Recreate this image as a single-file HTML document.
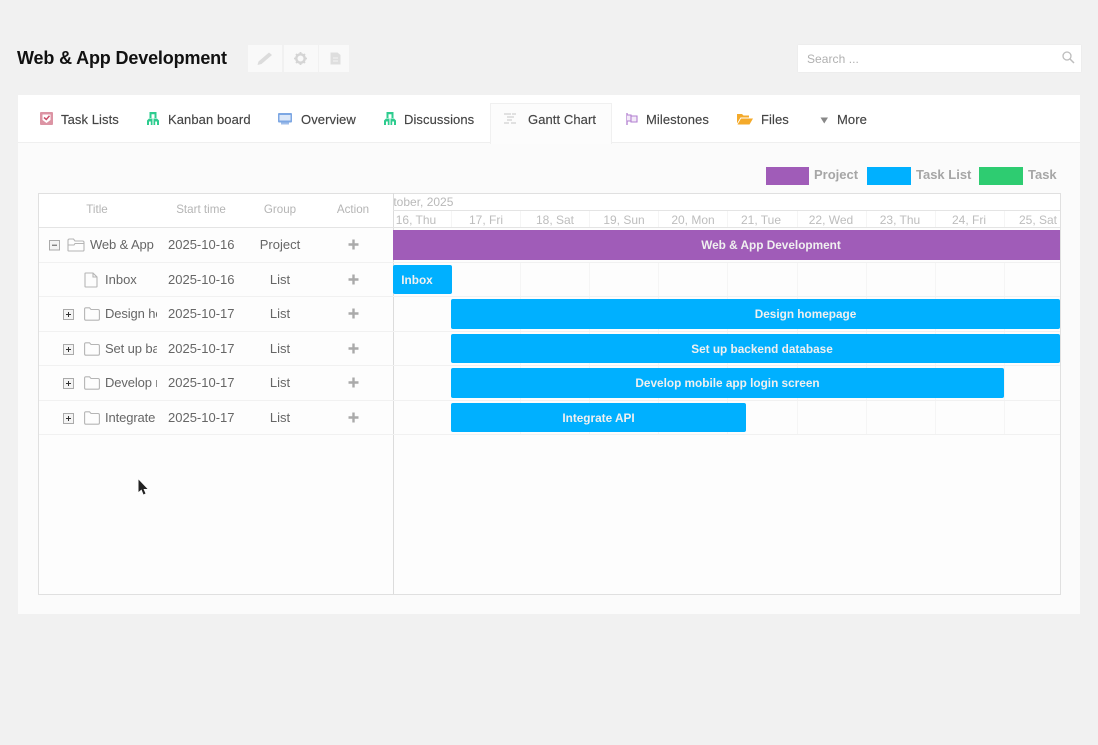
<!DOCTYPE html>
<html><head><meta charset="utf-8">
<style>
html,body{margin:0;padding:0;width:1098px;height:745px;overflow:hidden;background:#f1f1f1;font-family:"Liberation Sans",sans-serif}
#w{position:absolute;left:0;top:0;width:1098px;height:745px;overflow:hidden;background:#f1f1f1;filter:blur(.35px)}
.a{position:absolute}
.t{position:absolute;white-space:nowrap;line-height:16px}
.tab{position:absolute;top:112px;font-size:13px;letter-spacing:.08px;color:#444;white-space:nowrap;line-height:16px;-webkit-text-stroke:.15px #444}
.h{position:absolute;top:202px;font-size:11.6px;color:#b5b5b5;line-height:16px;transform:translateX(-50%);white-space:nowrap}
.c{position:absolute;font-size:13px;color:#666;line-height:16px;white-space:nowrap}
.k{letter-spacing:-.12px}
.m{transform:translateX(-50%)}
.d{position:absolute;top:212px;font-size:12px;color:#bdbdbd;line-height:16px;transform:translateX(-50%);white-space:nowrap}
.bar{position:absolute;color:#f0f0f0;font-weight:bold;font-size:11.8px;line-height:30px;border-radius:2px;background:#00b0ff;height:29.5px}
.bar span{position:absolute;top:0;transform:translateX(-50%);white-space:nowrap}
.hl{position:absolute;left:39px;width:1021px;height:1px;background:#f1f1f1}
.vl{position:absolute;width:1px;background:#f5f5f5}
.plus{position:absolute;left:348px;width:11px;height:11px}
.btn{position:absolute;top:45px;height:27px;background:#f9f9f9}
svg{position:absolute;overflow:visible}
</style></head><body><div id="w">

<div class="t" style="left:17px;top:48px;font-size:18px;line-height:21px;font-weight:bold;color:#111;letter-spacing:-.15px">Web &amp; App Development</div>

<div class="btn" style="left:248px;width:34px"></div>
<div class="btn" style="left:284px;width:34px"></div>
<div class="btn" style="left:319px;width:30px"></div>
<svg style="left:257px;top:51px" width="16" height="15" viewBox="0 0 16 15"><path d="M.5 14 L1.500 10.500 L12 1.500 L15 4 L4.500 13 Z" fill="#dcdcdc"/></svg>
<svg style="left:293px;top:51px" width="15" height="15" viewBox="0 0 15 15"><circle cx="7.500" cy="7.500" r="4.200" fill="none" stroke="#d5d5d5" stroke-width="2.400"/><path d="M7.500 1V3M7.500 12V14M1 7.500H3M12 7.500H14M3 3L4.500 4.500M10.500 10.500L12 12M12 3L10.500 4.500M4.500 10.500L3 12" stroke="#d5d5d5" stroke-width="1.800"/></svg>
<svg style="left:329.500px;top:52px" width="11" height="13" viewBox="0 0 11 13"><path d="M.5 .5H7.500L10.500 3V12.500H.5Z" fill="#dedede"/><path d="M3 6H8M3 9H8" stroke="#f4f4f4"/></svg>

<div class="a" style="left:798px;top:45px;width:283px;height:27px;background:#fff;box-shadow:0 0 1px #ddd"></div>
<div class="t" style="left:807px;top:51px;font-size:12px;letter-spacing:.05px;color:#b0b0b0">Search ...</div>
<svg style="left:1061px;top:50px" width="14" height="14" viewBox="0 0 14 14"><circle cx="6" cy="6" r="4" fill="none" stroke="#bdbdbd" stroke-width="1.300"/><path d="M9 9L13 13" stroke="#bdbdbd" stroke-width="1.500"/></svg>

<div class="a" style="left:18px;top:95px;width:1062px;height:519px;background:#fbfbfb"></div>
<div class="a" style="left:18px;top:95px;width:1062px;height:48px;background:#fff;border-bottom:1px solid #efefef;box-sizing:border-box"></div>
<div class="a" style="left:490px;top:103px;width:122px;height:41px;background:#fcfcfc;border:1px solid #f0f0f0;border-bottom:none;box-sizing:border-box"></div>

<svg style="left:40px;top:112px" width="13" height="13" viewBox="0 0 13 13"><rect x="0" y="0" width="13" height="13" rx="1" fill="#dc94a4"/><path d="M2.500 2.500H10.500V8L6.500 11L2.500 8Z" fill="#fff"/><path d="M4 5.500L6.300 7.500L9.500 3.800" stroke="#c9506b" stroke-width="1.500" fill="none"/></svg>
<div class="tab" style="left:61px">Task Lists</div>
<svg style="left:147px;top:112px" width="12" height="13" viewBox="0 0 12 13"><path d="M2.500 0H9.500V6H7.500V2.200H4.500V6H2.500Z M0 13V8.500L2 6.500H5.500V13H3.800V9.500H2V13Z M12 13V8.500L10 6.500H6.500V13H8.200V9.500H10V13Z" fill="#2ecc8f"/></svg>
<div class="tab" style="left:168px">Kanban board</div>
<svg style="left:278px;top:113px" width="14" height="12" viewBox="0 0 14 12"><rect x="0" y="0" width="14" height="9.500" rx="1" fill="#7da7e3"/><rect x="1.500" y="2" width="11" height="5.500" fill="#dbe7f8"/><rect x="3" y="9.500" width="8" height="2" fill="#9fbdea"/></svg>
<div class="tab" style="left:301px">Overview</div>
<svg style="left:384px;top:112px" width="12" height="13" viewBox="0 0 12 13"><path d="M2.500 0H9.500V6H7.500V2.200H4.500V6H2.500Z M0 13V8.500L2 6.500H5.500V13H3.800V9.500H2V13Z M12 13V8.500L10 6.500H6.500V13H8.200V9.500H10V13Z" fill="#2ecc8f"/></svg>
<div class="tab" style="left:404px">Discussions</div>
<svg style="left:504px;top:113px" width="13" height="12" viewBox="0 0 13 12"><path d="M0 1H7M8 1H12M3 4H10M3 7H8M0 10H5M7 10H12" stroke="#d8d8d8" stroke-width="1.500"/></svg>
<div class="tab" style="left:528px">Gantt Chart</div>
<svg style="left:626px;top:113px" width="12" height="12" viewBox="0 0 12 12"><path d="M1 0V12" stroke="#b27fd0" stroke-width="1.300"/><path d="M1 2H5V3H11V9H5V8H1M5 3V8" stroke="#b27fd0" stroke-width="1.100" fill="#f3eaf8"/></svg>
<div class="tab" style="left:646px">Milestones</div>
<svg style="left:737px;top:113px" width="16" height="12" viewBox="0 0 16 12"><path d="M0 1H5L6.500 2.500H12V4.500H3.500L0 10.500Z M4 5.500H16L12.500 11.500H.500Z" fill="#f4aa2a"/></svg>
<div class="tab" style="left:761px">Files</div>
<svg style="left:820px;top:116.500px" width="9" height="7" viewBox="0 0 9 7"><path d="M.5 .5H8L4.250 6.500Z" fill="#888"/></svg>
<div class="tab" style="left:837px">More</div>

<div class="a" style="left:766px;top:167px;width:43px;height:18px;background:#a05cb8"></div>
<div class="t" style="left:814px;top:167px;font-size:13px;font-weight:bold;color:#a6a6a6">Project</div>
<div class="a" style="left:867px;top:167px;width:44px;height:18px;background:#00b0ff"></div>
<div class="t" style="left:916px;top:167px;font-size:13px;font-weight:bold;color:#a6a6a6">Task List</div>
<div class="a" style="left:979px;top:167px;width:44px;height:18px;background:#2ecc71"></div>
<div class="t" style="left:1028px;top:167px;font-size:13px;font-weight:bold;color:#a6a6a6">Task</div>

<div class="a" style="left:38px;top:193px;width:1023px;height:402px;border:1px solid #e0e0e0;box-sizing:border-box;background:#fdfdfd"></div>
<div class="a" style="left:39px;top:194px;width:1021px;height:34px;background:#fff"></div>
<div class="a" style="left:393px;top:193px;width:1px;height:401px;background:#dcdcdc"></div>
<div class="a" style="left:39px;top:227px;width:1021px;height:1px;background:#e4e4e4"></div>
<div class="a" style="left:393px;top:210px;width:667px;height:1px;background:#e4e4e4"></div>

<div class="h" style="left:97px">Title</div>
<div class="h" style="left:201px">Start time</div>
<div class="h" style="left:280px">Group</div>
<div class="h" style="left:353px">Action</div>

<div class="a" style="left:394px;top:194px;width:200px;height:16px;overflow:hidden"><div class="t" style="left:-16px;top:0;font-size:12px;color:#b9b9b9">October, 2025</div></div>
<div class="d" style="left:416px">16, Thu</div>
<div class="d" style="left:486px">17, Fri</div>
<div class="d" style="left:555px">18, Sat</div>
<div class="d" style="left:624px">19, Sun</div>
<div class="d" style="left:693px">20, Mon</div>
<div class="d" style="left:761px">21, Tue</div>
<div class="d" style="left:831px">22, Wed</div>
<div class="d" style="left:900px">23, Thu</div>
<div class="d" style="left:969px">24, Fri</div>
<div class="d" style="left:1038px">25, Sat</div>

<div class="vl" style="left:451px;top:211px;height:16px"></div>
<div class="vl" style="left:520px;top:211px;height:16px"></div>
<div class="vl" style="left:589px;top:211px;height:16px"></div>
<div class="vl" style="left:658px;top:211px;height:16px"></div>
<div class="vl" style="left:727px;top:211px;height:16px"></div>
<div class="vl" style="left:797px;top:211px;height:16px"></div>
<div class="vl" style="left:866px;top:211px;height:16px"></div>
<div class="vl" style="left:935px;top:211px;height:16px"></div>
<div class="vl" style="left:1004px;top:211px;height:16px"></div>

<div class="vl" style="left:520px;top:262px;height:173px"></div>
<div class="vl" style="left:589px;top:262px;height:173px"></div>
<div class="vl" style="left:658px;top:262px;height:173px"></div>
<div class="vl" style="left:727px;top:262px;height:173px"></div>
<div class="vl" style="left:797px;top:262px;height:173px"></div>
<div class="vl" style="left:866px;top:262px;height:173px"></div>
<div class="vl" style="left:935px;top:262px;height:173px"></div>
<div class="vl" style="left:1004px;top:262px;height:173px"></div>

<div class="hl" style="top:262px"></div>
<div class="hl" style="top:296px"></div>
<div class="hl" style="top:331px"></div>
<div class="hl" style="top:365px"></div>
<div class="hl" style="top:400px"></div>
<div class="hl" style="top:434px"></div>

<div class="bar" style="left:393px;top:230px;width:667px;background:#a05cb8;border-radius:0"><span style="left:378px">Web &amp; App Development</span></div>
<div class="bar" style="left:393px;top:264.500px;width:58.500px"><span style="left:24px">Inbox</span></div>
<div class="bar" style="left:451px;top:299px;width:609px"><span style="left:354.500px">Design homepage</span></div>
<div class="bar" style="left:451px;top:333.500px;width:609px"><span style="left:311px">Set up backend database</span></div>
<div class="bar" style="left:451px;top:368px;width:552.500px"><span style="left:276.500px">Develop mobile app login screen</span></div>
<div class="bar" style="left:451px;top:402.500px;width:294.500px"><span style="left:147.500px">Integrate API</span></div>

<svg style="left:49px;top:240px" width="10" height="10" viewBox="0 0 10 10"><rect x=".5" y=".5" width="10" height="9.500" fill="#f4f4f4" stroke="#aaa"/><path d="M3 5.200H8" stroke="#555"/></svg>
<svg style="left:67px;top:238px" width="18" height="14" viewBox="0 0 18 14"><path d="M1 12.500V2.500Q1 1 2.500 1H6.500L8 3H15.500Q17 3 17 4.500V12Q17 13 16 13H2Q1 13 1 12.500ZM1 7H7L8 5.500H17" fill="none" stroke="#b5b5b5" stroke-width="1.100"/></svg>
<div class="c k" style="left:90px;top:237px">Web &amp; App</div>
<div class="c" style="left:168px;top:237px">2025-10-16</div>
<div class="c m" style="left:280px;top:237px">Project</div>
<svg class="plus" style="top:239px" viewBox="0 0 11 11"><path d="M5.500 .5V10.500M.5 5.500H10.500" stroke="#aaa" stroke-width="2.400"/></svg>

<svg style="left:84px;top:272px" width="14" height="16" viewBox="0 0 14 16"><path d="M1.500 1H9L13 5V14.500Q13 15 12.500 15H1.500Q1 15 1 14.500V1.500Q1 1 1.500 1ZM9 1V5H13" fill="none" stroke="#b5b5b5" stroke-width="1.100"/></svg>
<div class="c" style="left:105px;top:272px">Inbox</div>
<div class="c" style="left:168px;top:272px">2025-10-16</div>
<div class="c m" style="left:280px;top:272px">List</div>
<svg class="plus" style="top:274px" viewBox="0 0 11 11"><path d="M5.500 .5V10.500M.5 5.500H10.500" stroke="#aaa" stroke-width="2.400"/></svg>

<svg style="left:63px;top:309px" width="11" height="11" viewBox="0 0 11 11"><rect x=".5" y=".5" width="10" height="10" fill="#f4f4f4" stroke="#aaa"/><path d="M3 5.500H8M5.500 3V8" stroke="#333"/></svg>
<svg style="left:84px;top:307px" width="16" height="14" viewBox="0 0 16 14"><path d="M.6 12V2Q.6 .8 1.800 .8H5.500L7 2.500H14Q15.400 2.500 15.400 3.800V12Q15.400 13.200 14 13.200H2Q.6 13.200 .6 12Z" fill="none" stroke="#b5b5b5" stroke-width="1.100"/></svg>
<div class="a" style="left:105px;top:306px;width:52px;height:16px;overflow:hidden"><div class="c k" style="left:0;top:0">Design homepage</div></div>
<div class="c" style="left:168px;top:306px">2025-10-17</div>
<div class="c m" style="left:280px;top:306px">List</div>
<svg class="plus" style="top:308px" viewBox="0 0 11 11"><path d="M5.500 .5V10.500M.5 5.500H10.500" stroke="#aaa" stroke-width="2.400"/></svg>

<svg style="left:63px;top:343.500px" width="11" height="11" viewBox="0 0 11 11"><rect x=".5" y=".5" width="10" height="10" fill="#f4f4f4" stroke="#aaa"/><path d="M3 5.500H8M5.500 3V8" stroke="#333"/></svg>
<svg style="left:84px;top:341.500px" width="16" height="14" viewBox="0 0 16 14"><path d="M.6 12V2Q.6 .8 1.800 .8H5.500L7 2.500H14Q15.400 2.500 15.400 3.800V12Q15.400 13.200 14 13.200H2Q.6 13.200 .6 12Z" fill="none" stroke="#b5b5b5" stroke-width="1.100"/></svg>
<div class="a" style="left:105px;top:341px;width:52px;height:16px;overflow:hidden"><div class="c k" style="left:0;top:0">Set up backend database</div></div>
<div class="c" style="left:168px;top:341px">2025-10-17</div>
<div class="c m" style="left:280px;top:341px">List</div>
<svg class="plus" style="top:343px" viewBox="0 0 11 11"><path d="M5.500 .5V10.500M.5 5.500H10.500" stroke="#aaa" stroke-width="2.400"/></svg>

<svg style="left:63px;top:378px" width="11" height="11" viewBox="0 0 11 11"><rect x=".5" y=".5" width="10" height="10" fill="#f4f4f4" stroke="#aaa"/><path d="M3 5.500H8M5.500 3V8" stroke="#333"/></svg>
<svg style="left:84px;top:376px" width="16" height="14" viewBox="0 0 16 14"><path d="M.6 12V2Q.6 .8 1.800 .8H5.500L7 2.500H14Q15.400 2.500 15.400 3.800V12Q15.400 13.200 14 13.200H2Q.6 13.200 .6 12Z" fill="none" stroke="#b5b5b5" stroke-width="1.100"/></svg>
<div class="a" style="left:105px;top:375px;width:52px;height:16px;overflow:hidden"><div class="c k" style="left:0;top:0">Develop mobile app login screen</div></div>
<div class="c" style="left:168px;top:375px">2025-10-17</div>
<div class="c m" style="left:280px;top:375px">List</div>
<svg class="plus" style="top:377px" viewBox="0 0 11 11"><path d="M5.500 .5V10.500M.5 5.500H10.500" stroke="#aaa" stroke-width="2.400"/></svg>

<svg style="left:63px;top:412.500px" width="11" height="11" viewBox="0 0 11 11"><rect x=".5" y=".5" width="10" height="10" fill="#f4f4f4" stroke="#aaa"/><path d="M3 5.500H8M5.500 3V8" stroke="#333"/></svg>
<svg style="left:84px;top:410.500px" width="16" height="14" viewBox="0 0 16 14"><path d="M.6 12V2Q.6 .8 1.800 .8H5.500L7 2.500H14Q15.400 2.500 15.400 3.800V12Q15.400 13.200 14 13.200H2Q.6 13.200 .6 12Z" fill="none" stroke="#b5b5b5" stroke-width="1.100"/></svg>
<div class="a" style="left:105px;top:410px;width:52px;height:16px;overflow:hidden"><div class="c k" style="left:0;top:0">Integrate API</div></div>
<div class="c" style="left:168px;top:410px">2025-10-17</div>
<div class="c m" style="left:280px;top:410px">List</div>
<svg class="plus" style="top:412px" viewBox="0 0 11 11"><path d="M5.500 .5V10.500M.5 5.500H10.500" stroke="#aaa" stroke-width="2.400"/></svg>

<svg style="left:138px;top:479px" width="11" height="17" viewBox="0 0 11 17"><path d="M.5 .5V13L3.500 10.500L5.500 15.500L7.500 14.500L5.500 10H9.500Z" fill="#222"/></svg>
</div></body></html>
